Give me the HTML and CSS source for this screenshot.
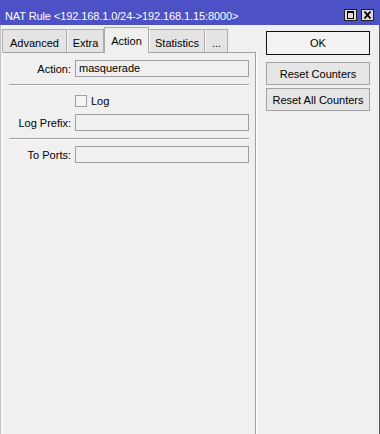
FILE: index.html
```html
<!DOCTYPE html>
<html lang="en">
<head>
<meta charset="UTF-8">
<title>NAT Rule</title>
<link rel="stylesheet" href="styles.css">
</head>
<body>
<div class="win">
  <div class="titlebar">
    <span class="title">NAT Rule &lt;192.168.1.0/24-&gt;192.168.1.15:8000&gt;</span>
    <div class="ctl">
      <span class="cbtn"><svg width="11" height="10" viewBox="0 0 11 10"><rect x="2.5" y="2.5" width="6" height="6" fill="none" stroke="#000"/><rect x="2" y="1" width="7" height="2" fill="#000"/></svg></span>
      <span class="cbtn"><svg width="11" height="10" viewBox="0 0 11 10"><path d="M2.5 1.5L8.5 8.5M8.5 1.5L2.5 8.5" stroke="#000" stroke-width="1.9"/></svg></span>
    </div>
  </div>

  <div class="main">
    <div class="left">
      <!-- tabs -->
      <div class="tabs">
        <div class="tab w-adv">Advanced</div>
        <div class="tab w-extra">Extra</div>
        <div class="tab active w-action">Action</div>
        <div class="tab w-stats">Statistics</div>
        <div class="tab w-more">...</div>
      </div>

      <div class="panel">
        <div class="row first">
          <span class="lbl">Action:</span>
          <div class="field">masquerade</div>
        </div>
        <div class="sep"></div>
        <div class="row check">
          <span class="box"></span><span>Log</span>
        </div>
        <div class="row">
          <span class="lbl">Log Prefix:</span>
          <div class="field"></div>
        </div>
        <div class="sep"></div>
        <div class="row last">
          <span class="lbl">To Ports:</span>
          <div class="field"></div>
        </div>
      </div>
    </div>

    <div class="side">
      <button class="btn ok">OK</button>
      <button class="btn reset">Reset Counters</button>
      <button class="btn">Reset All Counters</button>
    </div>
  </div>
</div>
</body>
</html>
```

FILE: styles.css
```css
*{margin:0;padding:0;box-sizing:border-box}
html,body{width:380px;height:434px;overflow:hidden;background:#f0f0f0;font-family:'Liberation Sans',Arial,sans-serif;font-size:11px;color:#000}

/* ---------------- Window ---------------- */
.win{width:380px;height:434px;display:flex;flex-direction:column}
.titlebar{height:25px;flex:0 0 25px;background:#4c52c6;color:#fff;display:flex;align-items:flex-start;padding:8px 6px 0 5px;line-height:16px}
.title{letter-spacing:-.1px}
.ctl{margin-left:auto;margin-top:1px;display:flex;gap:4px}
.cbtn{width:13px;height:12px;border:1px solid #222;background:#dcdcdc;display:flex;align-items:center;justify-content:center}
.cbtn svg{display:block}

.main{flex:1;display:flex;border-left:1px solid #c4c4c4;border-right:1px solid #5a5a5a}
.left{width:255px;padding:2px 0 0 1px;display:flex;flex-direction:column}

/* ---------------- Tabs ---------------- */
.tabs{height:25px;display:flex;align-items:flex-end;position:relative;z-index:2}
.tab{height:23px;padding-top:5px;line-height:16px;text-align:center;background:#e4e4e4;border:1px solid #acacac;border-bottom:none;border-left-color:#f6f6f6}
.tab.active{height:26px;margin-bottom:-1px;background:#f0f0f0;border-left-color:#acacac}
.w-adv{width:65px;border-left-color:#acacac}
.w-extra{width:37px}
.w-action{width:45px}
.w-stats{width:56px}
.w-more{width:23px}

/* ---------------- Panel ---------------- */
.panel{flex:1;border:1px solid #a0a0a0;border-left-color:#fdfdfd;border-bottom:none;padding:7px 6px 0 0;box-shadow:1px 0 0 #fff;display:flex;flex-direction:column}
.row{display:flex;align-items:center;gap:4px;margin-top:7px}
.row.first{margin-top:0}
.row.last{margin-top:6px}
.lbl{width:68px;text-align:right;white-space:nowrap}
.field{flex:1;height:17px;line-height:15px;padding:0 3px;border:1px solid #a0a0a0;background:#f0f0f0}
.sep{height:2px;margin:7px 0 0 6px;border-top:1px solid #a0a0a0;border-bottom:1px solid #fff}
.row.check{margin-top:9px;padding-left:72px;gap:4px;height:12px}
.box{width:12px;height:12px;border:1px solid #a0a0a0;background:#f4f4f4}

/* ---------------- Buttons ---------------- */
.side{width:123px;padding:6px 0 0 10px;display:flex;flex-direction:column}
.btn{width:104px;height:23px;font:inherit;color:#000;background:#e6e6e6;border:1px solid #a3a3a3;margin-top:3px;cursor:pointer}
.btn.ok{height:24px;margin-top:0;background:#f3f3f3;border:1px solid #111}
.btn.reset{margin-top:7px}
```
